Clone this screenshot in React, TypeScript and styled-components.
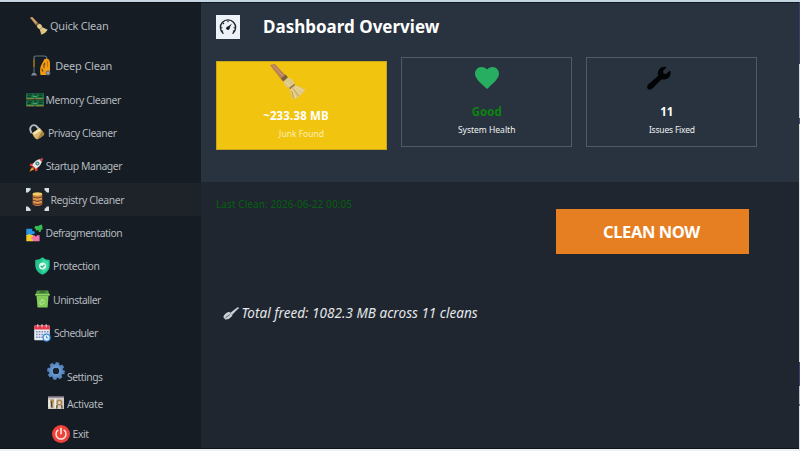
import React from 'react';
import styled, { createGlobalStyle } from 'styled-components';

const GlobalStyle = createGlobalStyle`
  * {
    box-sizing: border-box;
  }

  body {
    margin: 0;
    overflow: hidden;
    background: #eef1f4;
    font-family: 'Noto Sans', 'Open Sans', sans-serif;
  }
`;

/* ---------- Icons ---------- */

interface IconProps {
  w: number;
  h: number;
}

const BroomIcon: React.FC<IconProps & { handle?: string }> = ({ w, h, handle = '#b98258' }) => (
  <svg width={w} height={h} viewBox="0 0 36 36">
    <path d="M1 1.5 L4.5 0.5 L16 13 L12.5 16 Z" fill={handle} stroke={handle} strokeWidth="1.4" />
    <path d="M3 1.5 L14.5 13.5" stroke="#d0a072" strokeWidth="1" />
    <path d="M11 14.5 L15.5 10.5 L18 13.5 L13.5 17.5 Z" fill="#77603c" />
    <path d="M13.5 17.5 L18 13.5 Q23.5 14 24.5 20.5 L35.5 25.5 Q31 33 22.5 35.5 L19.5 24.5 Q14 22.5 13.5 17.5 Z" fill="#dfc784" />
    <path d="M19.5 24.5 L24.8 20.5" stroke="#9b7c42" strokeWidth="1.6" />
    <path d="M22 25 L26 34 M24 23.5 L31 30.5 M16 18 L20 22 M25 22 L33 27" stroke="#eedda2" strokeWidth="1" />
    <path d="M22 27 L23.5 34.5 M23 24.5 L28.5 32" stroke="#b7994f" strokeWidth="0.8" />
  </svg>
);

const SmallBroomIcon: React.FC<IconProps> = (props) => <BroomIcon {...props} handle="#d2a265" />;

const VacuumIcon: React.FC<IconProps> = ({ w, h }) => (
  <svg width={w} height={h} viewBox="0 0 20 21">
    <path d="M3 5 V3 Q3 1 5 1 H13 Q16 1 16 4" fill="none" stroke="#66727d" strokeWidth="1.2" />
    <path d="M3 4.5 V12" stroke="#96701e" strokeWidth="1.7" />
    <path d="M3 12 V18" stroke="#5b636c" strokeWidth="1.2" />
    <path d="M0 20.5 L1.5 18 H4.5 L6 20.5 Z" fill="#7d8994" />
    <path d="M13.5 4 Q18.8 2.5 19 8 V18 Q18 20.3 14 20 H9.5 Q8.5 14 10 10.5 Z" fill="#f39a12" />
    <path d="M14 8 Q12 10.5 13.2 13 M10.8 14 L12 16.5" fill="none" stroke="#694813" strokeWidth="1.3" />
    <path d="M16.5 6 V12" stroke="#b56f0c" strokeWidth="0.8" />
    <circle cx="17" cy="18" r="2.4" fill="#6b737c" />
    <circle cx="17" cy="18" r="1" fill="#aab1b7" />
  </svg>
);

const MemoryIcon: React.FC<IconProps> = ({ w, h }) => (
  <svg width={w} height={h} viewBox="0 0 18 14">
    {[0, 7].map((y) => (
      <g key={y} transform={`translate(0 ${y})`}>
        <rect y="0.3" width="18" height="6" fill="#1c7345" />
        <path d="M1.5 1.8 H6 M8 1.8 H11 M13 1.8 H16.5 M1.5 3.4 H5 M12.5 3.4 H16.5" stroke="#0b2d20" strokeWidth="0.9" />
        <path d="M7 3.4 H11" stroke="#54ae73" strokeWidth="0.9" />
        <path d="M0.5 5.8 H8 M9.5 5.8 H17.5" stroke="#a98a33" strokeWidth="1" />
      </g>
    ))}
  </svg>
);

const PadlockIcon: React.FC<IconProps> = ({ w, h }) => (
  <svg width={w} height={h} viewBox="0 0 16 16">
    <path d="M2.6 9.3 Q0.3 5.2 1.8 3 Q4 0 7 1.8 L10 5" fill="none" stroke="#b5babd" strokeWidth="1.9" />
    <path d="M3 9.2 L10.8 3.7 L15.4 9.8 Q14.5 12.5 8 15.6 Q5.5 14.5 3 9.2 Z" fill="#d7b96c" />
    <path d="M4 8.8 L10.4 4.5 L11.9 6.5 L5.5 11 Z" fill="#f4e5b4" />
    <path d="M8 15.4 Q13.5 13 15.2 10 L13 7.2 Z" fill="#a9823f" />
  </svg>
);

const RocketIcon: React.FC<IconProps> = ({ w, h }) => (
  <svg width={w} height={h} viewBox="0 0 14 14">
    <path d="M4.2 5.2 L1 6 L0.8 8.3 L4 8 Z M8.8 9.8 L8.2 13 L6 13.2 L6 10 Z" fill="#e43d32" />
    <path d="M3.3 7.5 Q5.3 1.5 13.6 0.4 Q12.5 8.5 6.5 10.8 Z" fill="#e4edef" />
    <path d="M10 1.2 L13.6 0.4 L12.8 4 Z" fill="#e43d32" />
    <circle cx="8.4" cy="5.5" r="2" fill="#42716d" />
    <circle cx="8.4" cy="5.5" r="1" fill="#a4d6d2" />
    <path d="M3 9 L0.3 13.7 L5.2 11.2 Z" fill="#f2a024" />
    <path d="M3.2 8.2 L5.8 10.8" stroke="#d8352b" strokeWidth="1.3" />
  </svg>
);

const RegistryIcon: React.FC<IconProps> = ({ w, h }) => (
  <svg width={w} height={h} viewBox="0 0 23 23">
    <path d="M0 0 H4.5 V2 L2 4.5 H0 Z M23 0 V4.5 H21 L18.5 2 V0 Z M0 23 V18.5 H2 L4.5 21 V23 Z M23 23 H18.5 V21 L21 18.5 H23 Z" fill="#d3dfe6" />
    <path d="M6.7 6 V16.5 Q11.5 19.5 16.2 16.5 V6 Z" fill="#cd8140" />
    <ellipse cx="11.4" cy="6" rx="4.8" ry="1.7" fill="#f0cb67" />
    <path d="M6.7 9 Q11.5 11.3 16.2 9 M6.7 12.3 Q11.5 14.6 16.2 12.3 M6.7 15.6 Q11.5 17.9 16.2 15.6" fill="none" stroke="#713c31" strokeWidth="1" />
    <path d="M7.2 10.4 Q11.5 12.4 15.8 10.4 M7.2 13.7 Q11.5 15.7 15.8 13.7" fill="none" stroke="#eab85c" strokeWidth="0.8" />
  </svg>
);

const PuzzleIcon: React.FC<IconProps> = ({ w, h }) => (
  <svg width={w} height={h} viewBox="0 0 17 18">
    <path d="M9.2 2.2 L11.2 1.8 Q12.3 3 13.2 1.2 L16 0.4 L16.7 5.2 L15 5.8 Q15.4 8.6 13.2 8 Q12 7.4 12.8 6 L10 6.4 Q10 4.8 8.8 4.6 Q7.8 3.2 9.2 2.2 Z" fill="#35bd50" />
    <path d="M0.3 4.7 H6.2 V7.2 Q9 6.5 8.8 9 Q8.2 11 6.2 10 V12 H0.3 Z" fill="#2796e4" />
    <path d="M0.3 11 H2.3 Q3 8.5 4.8 11 H7 V17.3 H0.3 Z" fill="#f5cb2c" />
    <path d="M6.8 11.2 H8.7 Q9.8 13.6 11 11.2 H13.6 V17.3 H6.8 V15.3 Q4.8 15.2 5 13.8 Q5.5 12.6 6.8 13 Z" fill="#f071ac" />
  </svg>
);

const ShieldIcon: React.FC<IconProps> = ({ w, h }) => (
  <svg width={w} height={h} viewBox="0 0 15 18">
    <path d="M7.5 0.2 Q10 2.6 14.7 3 V9 Q14.2 15 7.5 17.8 Q0.8 15 0.3 9 V3 Q5 2.6 7.5 0.2 Z" fill="#22c68d" />
    <path d="M7.5 2 Q10 4 13.2 4.4 V9 Q12.7 13.7 7.5 16 Z" fill="#3edaa4" />
    <circle cx="7.5" cy="9" r="3.5" fill="#dff8ed" />
    <path d="M5.7 9 L7.1 10.4 L9.5 7.8" fill="none" stroke="#1eae7d" strokeWidth="1.2" />
  </svg>
);

const BinIcon: React.FC<IconProps> = ({ w, h }) => (
  <svg width={w} height={h} viewBox="0 0 15 18">
    <path d="M2 0.6 H13 L14.7 4.5 V5.8 H0.3 V4.5 Z" fill="#559a40" />
    <path d="M4.5 1 H10.5 V3 H4.5 Z" fill="#377336" />
    <path d="M1.5 5.8 H13.5 L12.6 17.5 H2.5 Z" fill="#82cb5b" />
    <path d="M0.4 4.7 H14.6" stroke="#96d86b" strokeWidth="1.3" />
    <path d="M5.4 12.5 L7.4 9 L9.6 12.3 M9.4 13 L7 14.2 H5.2 L4.8 12" fill="none" stroke="#b9e89c" strokeWidth="1" />
  </svg>
);

const CalendarIcon: React.FC<IconProps> = ({ w, h }) => (
  <svg width={w} height={h} viewBox="0 0 17 18">
    <rect x="0.2" y="1.6" width="15.6" height="14.6" rx="1" fill="#e9edf4" />
    <path d="M0.2 5.6 V2.5 Q0.2 1.6 1.2 1.6 H14.8 Q15.8 1.6 15.8 2.5 V5.6 Z" fill="#e43b4d" />
    <path d="M3.8 0.3 V3.3 M8 0.3 V3.3 M12.2 0.3 V3.3" stroke="#f1d5da" strokeWidth="1.1" />
    <path d="M2 7.8 H14.5 M2 10.5 H14.5 M2 13.2 H9" stroke="#7d8eac" strokeWidth="1.5" strokeDasharray="1.7 1" />
    <circle cx="12.6" cy="13.6" r="4.1" fill="#3a8de0" />
    <circle cx="12.6" cy="13.6" r="2.9" fill="#e1f1fd" />
    <path d="M12.5 11.7 V13.8 H14.2" fill="none" stroke="#3472b7" strokeWidth="0.8" />
  </svg>
);

const GearIcon: React.FC<IconProps> = ({ w, h }) => (
  <svg width={w} height={h} viewBox="0 0 18 18">
    <g fill="#5583bb">
      {[0, 45, 90, 135, 180, 225, 270, 315].map((a) => (
        <path key={a} d="M6.8 3.5 L7.3 0.2 H10.7 L11.2 3.5 Z" transform={`rotate(${a + 10} 9 9)`} />
      ))}
    </g>
    <circle cx="9" cy="9" r="5" fill="none" stroke="#5c8cc4" strokeWidth="4" />
    <circle cx="9" cy="9" r="4.2" fill="none" stroke="#7ba4d2" strokeWidth="0.9" />
    <circle cx="9" cy="9" r="3.1" fill="#18232f" />
  </svg>
);

const ActivateIcon: React.FC<IconProps> = ({ w, h }) => (
  <svg width={w} height={h} viewBox="0 0 16 13">
    <rect width="16" height="13" fill="#d1cdc8" />
    <path d="M0 0.8 H16" stroke="#73667a" strokeWidth="1.6" />
    <path d="M0.5 4 H1.8 V11 H0.5 Z M6.5 3 H8 V12 H6.5 Z" fill="#f3f0ea" />
    <path d="M2.3 3.6 H5.8 V6 L5.2 7.5 V12 H3 V7.5 L2.3 6 Z" fill="#a5904d" />
    <path d="M3.4 5.5 V11" stroke="#413b2e" strokeWidth="1" />
    <circle cx="11.4" cy="6.4" r="3" fill="#a88357" />
    <circle cx="11.4" cy="6.4" r="1.5" fill="#e3d2ab" />
    <path d="M9 9 L8.6 12.6 M13.6 9 L14.2 12.6" stroke="#755838" strokeWidth="1.5" />
  </svg>
);

const PowerIcon: React.FC<IconProps> = ({ w, h }) => (
  <svg width={w} height={h} viewBox="0 0 18 18">
    <circle cx="9" cy="9" r="9" fill="#ee4139" />
    <path d="M5.9 5.2 A5 5 0 1 0 12.1 5.2" fill="none" stroke="#fce7e4" strokeWidth="1.5" strokeLinecap="round" />
    <path d="M9 3.4 V8.8" stroke="#fce7e4" strokeWidth="1.6" strokeLinecap="round" />
  </svg>
);

const GaugeIcon: React.FC<IconProps> = ({ w, h }) => (
  <svg width={w} height={h} viewBox="0 0 18 16">
    <path d="M4 14.2 A7.6 7.6 0 1 1 14 14.2" fill="none" stroke="#20262b" strokeWidth="1.4" strokeLinecap="round" />
    <path d="M1.8 8.8 H3.4 M14.6 8.8 H16.2 M4 4 L5 5 M9 1.4 V3.2 M2.6 12.5 L4 11.8 M15.4 12.5 L14 11.8" stroke="#20262b" strokeWidth="1.1" />
    <path d="M8.2 8.3 L13 4.5 L9.8 9.9 Z" fill="#14191d" />
    <circle cx="8.9" cy="9.2" r="1.7" fill="#14191d" />
  </svg>
);

const HeartIcon: React.FC<IconProps> = ({ w, h }) => (
  <svg width={w} height={h} viewBox="0 0 24 22">
    <path d="M12 22 L10.3 20.4 C4.1 14.8 0 11.1 0 6.6 C0 2.9 2.9 0 6.6 0 C8.7 0 10.7 1 12 2.5 C13.3 1 15.3 0 17.4 0 C21.1 0 24 2.9 24 6.6 C24 11.1 19.9 14.8 13.7 20.4 Z" fill="#27ae60" />
  </svg>
);

const WrenchIcon: React.FC<IconProps> = ({ w, h }) => (
  <svg width={w} height={h} viewBox="0 0 24 24">
    <path d="M19.6 1.2 L16 5 L16.5 7.5 L19 8 L23 4.6 C24.3 7.6 23.4 10.8 20.6 12.6 C18.6 13.8 16.3 13.8 14.6 13.2 L5.4 22.6 C4 24 1.9 24.1 0.9 22.9 C-0.2 21.8 -0.2 19.8 1.2 18.6 L11.2 9.8 C10.5 7.8 10.6 5.6 11.9 3.7 C13.7 1.1 16.7 0 19.6 1.2 Z" fill="#020304" />
  </svg>
);

const BrushIcon: React.FC<IconProps> = ({ w, h }) => (
  <svg width={w} height={h} viewBox="0 0 16 13">
    <path d="M7.3 5.7 L14.6 0.3 Q16 0 15.6 1.3 L9 8 Z" fill="#cbd0d4" />
    <path d="M6.2 4.8 L9.5 8.2 L8.4 9.7 Q6 12.7 2.2 12.4 L0.3 10 Q1.5 6 6.2 4.8 Z" fill="#cbd0d4" />
    <path d="M2.5 10.8 L6.8 7.6" stroke="#4b535c" strokeWidth="0.9" />
  </svg>
);

/* ---------- Layout ---------- */

const Desktop = styled.div`
  display: grid;
  grid-template-columns: 799px 1px;
  width: 800px;
  height: 451px;
`;

const Window = styled.div`
  display: flex;
  height: 449px;
  border-top: 2px solid #c5d5e2;
  border-bottom: 1px solid #10151b;
`;

/* sliver of the desktop behind the window */
const Backdrop = styled.div`
  height: 451px;
  background: linear-gradient(
    #c5d5e2 0 2px,
    #36406e 2px 42px,
    #303e68 42px 64px,
    #d5dade 64px 118px,
    #46517f 118px 124px,
    #dfe4e2 124px 362px,
    #3e4374 362px 386px,
    #bcc5d4 386px 404px,
    #6b7391 404px 406px,
    #dde2e8 406px
  );
`;

const Sidebar = styled.nav`
  width: 201px;
  flex-shrink: 0;
  background: #151c24;
  border-top: 1px solid #0a0e13;
`;

const NavItem = styled.div<{ $height: number; $indent: number; $gap: number; $active?: boolean }>`
  display: flex;
  align-items: center;
  gap: ${(p) => p.$gap}px;
  height: ${(p) => p.$height}px;
  padding-left: ${(p) => p.$indent}px;
  background: ${(p) => (p.$active ? '#1d2329' : 'transparent')};
  cursor: pointer;

  svg {
    flex-shrink: 0;
  }
`;

const NavIcon = styled.span<{ $lift?: number }>`
  display: flex;
  margin-bottom: ${(p) => (p.$lift || 0) * 2}px;
`;

const NavLabel = styled.span<{ $size?: number; $tracking: number }>`
  padding-top: ${(p) => (p.$size ? 0 : 1.4)}px;
  font-size: ${(p) => p.$size || 10.4}px;
  line-height: 15px;
  letter-spacing: ${(p) => p.$tracking}px;
  color: #b4b9be;
  white-space: nowrap;
`;

const Main = styled.main`
  flex: 1;
  display: flex;
  flex-direction: column;
  min-width: 0;
`;

const Overview = styled.section`
  height: 180px;
  padding: 12px 0 0 15px;
  border-top: 1px solid #121820;
  background: #29333f;
`;

const TitleBar = styled.header`
  display: flex;
  align-items: center;
  gap: 23px;
  height: 24px;
`;

const TitleIcon = styled.span`
  display: flex;
  align-items: center;
  justify-content: center;
  width: 24px;
  height: 24px;
  background: #edf2f8;
`;

const Title = styled.h1`
  margin: 0;
  font-size: 17px;
  line-height: 24px;
  font-weight: 700;
  color: #fff;
  white-space: nowrap;
`;

const Cards = styled.div`
  display: flex;
  gap: 14.2px;
  margin-top: 18px;
`;

const Card = styled.div<{ $highlight?: boolean }>`
  display: flex;
  flex-direction: column;
  align-items: center;
  width: 171px;
  height: ${(p) => (p.$highlight ? 89 : 90)}px;
  margin-top: ${(p) => (p.$highlight ? 4 : 0)}px;
  border: 1px solid ${(p) => (p.$highlight ? '#c9a51f' : '#515a62')};
  background: ${(p) => (p.$highlight ? '#f1c40f' : 'transparent')};
`;

const CardIcon = styled.div<{ $top: number; $shift?: number }>`
  display: flex;
  height: 45px;
  padding-top: ${(p) => p.$top}px;
  margin-left: ${(p) => p.$shift || 0}px;
`;

const CardValue = styled.div<{ $color?: string; $tracking?: number; $shift?: number }>`
  font-size: 11.5px;
  line-height: 18px;
  font-weight: 700;
  letter-spacing: ${(p) => p.$tracking || 0}px;
  margin-left: ${(p) => p.$shift || 0}px;
  color: ${(p) => p.$color || '#fff'};
  white-space: nowrap;
`;

const CardLabel = styled.div<{ $color?: string; $tracking?: number }>`
  font-size: 8.5px;
  line-height: 17px;
  letter-spacing: ${(p) => p.$tracking || 0}px;
  color: ${(p) => p.$color || '#f0f2f3'};
  white-space: nowrap;
`;

const Details = styled.section`
  flex: 1;
  background: #1f2630;
`;

const ActionRow = styled.div`
  display: flex;
  justify-content: space-between;
  padding: 14px 50px 0 15px;
`;

const LastClean = styled.span`
  font-size: 10px;
  line-height: 16px;
  letter-spacing: 0.08px;
  color: #05600e;
  white-space: nowrap;
`;

const CleanButton = styled.button`
  width: 193px;
  height: 45px;
  margin-top: 13px;
  padding: 0 2px 0 0;
  border: 0;
  background: #e67e22;
  color: #fff;
  font: 700 16.5px/45px 'Noto Sans', 'Open Sans', sans-serif;
  letter-spacing: -0.4px;
  white-space: nowrap;
`;

const Summary = styled.p`
  display: flex;
  align-items: center;
  gap: 2.5px;
  margin: 49px 0 0 22px;
  font-size: 13.5px;
  line-height: 20px;
  font-style: italic;
  letter-spacing: 0.03px;
  color: #e4e6e9;
  white-space: nowrap;
`;

/* ---------- Data ---------- */

interface NavEntry {
  label: string;
  Icon: React.FC<IconProps>;
  w: number;
  h: number;
  height: number;
  indent: number;
  gap: number;
  tracking: number;
  size?: number;
  lift?: number;
  active?: boolean;
}

const navEntries: NavEntry[] = [
  { label: 'Quick Clean', Icon: SmallBroomIcon, w: 18, h: 18, height: 45, indent: 30, gap: 2, tracking: -0.25, size: 11 },
  { label: 'Deep Clean', Icon: VacuumIcon, w: 20, h: 21, height: 35, indent: 31, gap: 4.2, tracking: -0.2, size: 11 },
  { label: 'Memory Cleaner', Icon: MemoryIcon, w: 18, h: 14, height: 33.3, indent: 26, gap: 1.6, tracking: -0.41 },
  { label: 'Privacy Cleaner', Icon: PadlockIcon, w: 16, h: 16, height: 33.3, indent: 28.5, gap: 3.5, tracking: -0.42, lift: 1 },
  { label: 'Startup Manager', Icon: RocketIcon, w: 14, h: 14, height: 33.3, indent: 29, gap: 2.7, tracking: -0.43, lift: 1 },
  { label: 'Registry Cleaner', Icon: RegistryIcon, w: 23, h: 23, height: 33.3, indent: 25.5, gap: 2, tracking: -0.4, active: true },
  { label: 'Defragmentation', Icon: PuzzleIcon, w: 17, h: 18, height: 33.3, indent: 26, gap: 2.6, tracking: -0.5 },
  { label: 'Protection', Icon: ShieldIcon, w: 15, h: 18, height: 33.3, indent: 34.5, gap: 3.6, tracking: -0.41 },
  { label: 'Uninstaller', Icon: BinIcon, w: 15, h: 18, height: 33.3, indent: 34.5, gap: 3.6, tracking: -0.5 },
  { label: 'Scheduler', Icon: CalendarIcon, w: 17, h: 18, height: 33.3, indent: 34, gap: 3, tracking: -0.55 },
  { label: 'Settings', Icon: GearIcon, w: 18, h: 18, height: 54, indent: 46.5, gap: 2.5, tracking: -0.5, lift: 5 },
  { label: 'Activate', Icon: ActivateIcon, w: 16, h: 13, height: 0, indent: 47.5, gap: 3.5, tracking: -0.35, lift: 0.5 },
  { label: 'Exit', Icon: PowerIcon, w: 18, h: 18, height: 61, indent: 52, gap: 2.6, tracking: -0.45 },
];

const App: React.FC = () => {
  return (
    <>
      <GlobalStyle />
      <Desktop>
        <Window>
          <Sidebar>
            {navEntries.map(({ label, Icon, w, h, height, indent, gap, tracking, size, lift, active }) => (
              <NavItem key={label} $height={height} $indent={indent} $gap={gap} $active={active}>
                <NavIcon $lift={lift}>
                  <Icon w={w} h={h} />
                </NavIcon>
                <NavLabel $size={size} $tracking={tracking}>
                  {label}
                </NavLabel>
              </NavItem>
            ))}
          </Sidebar>
          <Main>
            <Overview>
              <TitleBar>
                <TitleIcon>
                  <GaugeIcon w={18} h={16} />
                </TitleIcon>
                <Title>Dashboard Overview</Title>
              </TitleBar>
              <Cards>
                <Card $highlight>
                  <CardIcon $top={2} $shift={-27}>
                    <BroomIcon w={36} h={36} />
                  </CardIcon>
                  <CardValue $shift={-11} $tracking={0.15}>
                    ~233.38 MB
                  </CardValue>
                  <CardLabel $color="#fdefb8">Junk Found</CardLabel>
                </Card>
                <Card>
                  <CardIcon $top={9}>
                    <HeartIcon w={24} h={22} />
                  </CardIcon>
                  <CardValue $color="#0b8410">Good</CardValue>
                  <CardLabel>System Health</CardLabel>
                </Card>
                <Card>
                  <CardIcon $top={8} $shift={-25}>
                    <WrenchIcon w={24} h={24} />
                  </CardIcon>
                  <CardValue $shift={-10}>11</CardValue>
                  <CardLabel $tracking={-0.2}>Issues Fixed</CardLabel>
                </Card>
              </Cards>
            </Overview>
            <Details>
              <ActionRow>
                <LastClean>Last Clean: 2026-06-22 00:05</LastClean>
                <CleanButton>CLEAN NOW</CleanButton>
              </ActionRow>
              <Summary>
                <BrushIcon w={16} h={13} />
                Total freed: 1082.3 MB across 11 cleans
              </Summary>
            </Details>
          </Main>
        </Window>
        <Backdrop />
      </Desktop>
    </>
  );
};

export default App;
